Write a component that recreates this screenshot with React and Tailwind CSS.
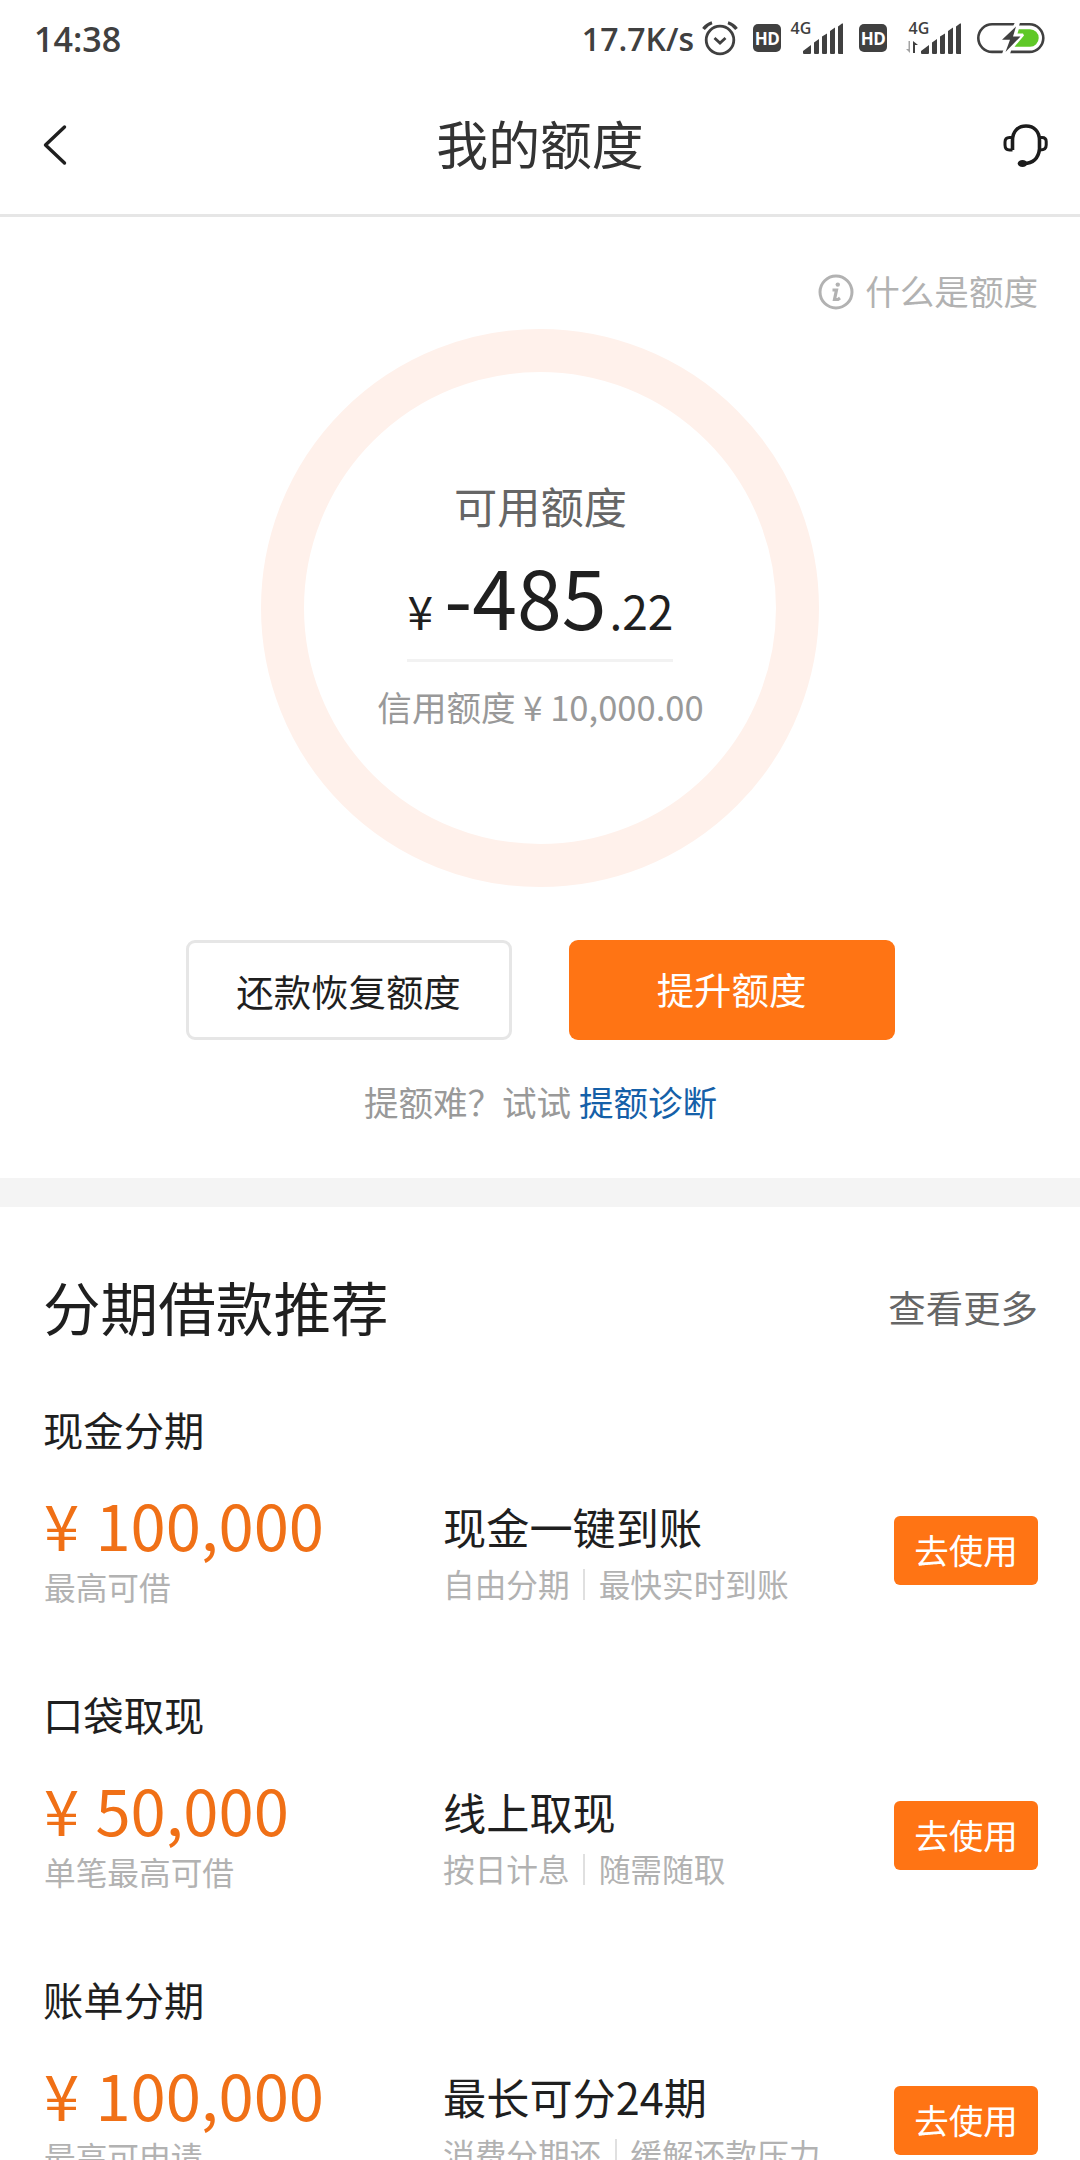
import React from 'react';

const plans = [
  {
    name: '现金分期',
    amount: '100,000',
    note: '最高可借',
    title: '现金一键到账',
    tags: ['自由分期', '最快实时到账'],
  },
  {
    name: '口袋取现',
    amount: '50,000',
    note: '单笔最高可借',
    title: '线上取现',
    tags: ['按日计息', '随需随取'],
  },
  {
    name: '账单分期',
    amount: '100,000',
    note: '最高可申请',
    title: '最长可分24期',
    tags: ['消费分期还', '缓解还款压力'],
  },
];

const AlarmIcon = () => (
  <svg className="w-[36px] h-[36px]" viewBox="0 0 36 36" fill="none" stroke="#404040" strokeWidth="2.8">
    <circle cx="18" cy="20" r="13.800" />
    <path d="M12.5 18l5.5 5 5.5-5" />
    <path d="M1.500 9Q4.500 4.500 10 2.800M34.500 9Q31.500 4.500 26 2.800" strokeWidth="3.200" />
  </svg>
);

const HdBadge = () => (
  <span className="flex w-[28px] h-[28px] items-center justify-center rounded-[5px] bg-[#404040] text-[17px] leading-none font-bold tracking-[-0.5px] text-white">
    HD
  </span>
);

const SignalIcon = ({ data }) => (
  <svg className="w-[58px] h-[36px]" viewBox="0 0 58 36" fill="#404040">
    <text x="5.500" y="15.500" fontSize="16" fontWeight="600">4G</text>
    {data && (
      <>
        <path d="M10 23v12h2V27l3 0z" />
        <path d="M7 23v12L3 31h2.500V23z" fill="#a3a3a3" />
      </>
    )}
    <path d="M18 35v-2l8-6v8a1 1 0 0 1-1 1h-6a1 1 0 0 1-1-1zM29 24.500l5-3.500v14a1 1 0 0 1-1 1h-3a1 1 0 0 1-1-1zM37 18.500l5-3v19.500a1 1 0 0 1-1 1h-3a1 1 0 0 1-1-1zM45 13l5-3.500v25.500a1 1 0 0 1-1 1h-3a1 1 0 0 1-1-1zM53 8.500l4-3q1.500-.5 1.500 1v28.500a1 1 0 0 1-1 1h-3.500a1 1 0 0 1-1-1z" />
  </svg>
);

const BatteryIcon = () => (
  <svg className="w-[68px] h-[34px]" viewBox="0 0 68 34" fill="none">
    <rect x="1.300" y="3.300" width="65" height="27.600" rx="13.800" stroke="#404040" strokeWidth="2.600" />
    <path d="M38.500 0h5L41 8l-8 25h-8l5-14z" fill="#fff" />
    <path d="M41.800 8.300H53a8.700 8.700 0 0 1 0 17.400H37.500L47 14.500 46 12.500h-5.500z" fill="#5fc827" />
    <path d="M39 5.500L25 18.800h8L28.500 31 43.500 15.500h-7.500z" fill="#404040" />
  </svg>
);

const BackIcon = () => (
  <svg className="w-[26px] h-[42px]" viewBox="0 0 26 42" fill="none" stroke="#1f1f1f" strokeWidth="3.4" strokeLinecap="round" strokeLinejoin="round">
    <path d="M22.500 3L3.500 21l19 18" />
  </svg>
);

const HeadsetIcon = () => (
  <svg className="w-[46px] h-[46px]" viewBox="0 0 46 46" fill="none" stroke="#1c1c1c" strokeWidth="3.600">
    <path d="M10.500 28V18.500C10.500 9.500 16 4 24 4S37.500 9.500 37.500 18.500v8.500C36.500 36 31 41.500 22 41.500" />
    <path d="M10.500 15.500H7.500Q3 15.500 3 20v3Q3 28 7.500 28h3M37.500 15.500H40Q44.200 15.500 44.200 19.500v3.500q0 5-6 5" strokeWidth="3" />
    <ellipse cx="20.500" cy="41.500" rx="4.800" ry="3.500" fill="#1c1c1c" stroke="none" />
  </svg>
);

const InfoIcon = () => (
  <svg className="w-[36px] h-[36px]" viewBox="0 0 36 36" fill="none" stroke="#b2b2b2">
    <circle cx="18" cy="18" r="16" strokeWidth="3" />
    <circle cx="19.800" cy="10.600" r="2.200" fill="#b2b2b2" stroke="none" />
    <path d="M14.500 16h4l-2 9.500h3.500l2-1.500" strokeWidth="3.200" />
  </svg>
);

function StatusBar() {
  return (
    <div className="flex h-[76px] items-center pl-[34px] pr-[35px] font-['Open_Sans','Noto_Sans',sans-serif] text-[#404040]">
      <span className="pt-[2px] text-[34px] leading-none font-semibold">14:38</span>
      <span className="ml-auto pt-[2px] text-[32px] leading-none font-semibold">17.7K/s</span>
      <div className="ml-[8px]"><AlarmIcon /></div>
      <div className="ml-[15px]"><HdBadge /></div>
      <div className="ml-[4px] -mt-[4px]"><SignalIcon /></div>
      <div className="ml-[16px]"><HdBadge /></div>
      <div className="ml-[16px] -mt-[4px]"><SignalIcon data /></div>
      <div className="ml-[16px]"><BatteryIcon /></div>
    </div>
  );
}

function Header() {
  return (
    <div className="flex h-[141px] items-center justify-between border-b-[3px] border-[#e6e6e6] pl-[42px] pr-[32px]">
      <div className="w-[56px]"><BackIcon /></div>
      <h1 className="pb-[5px] text-[51.84px] leading-[72px] text-[#333]">我的额度</h1>
      <div className="flex w-[66px] justify-end"><HeadsetIcon /></div>
    </div>
  );
}

function Quota() {
  return (
    <section className="flex h-[961px] flex-col items-center">
      <div className="mt-[50px] flex h-[50px] items-center gap-[11px] self-end pr-[42px] text-[34.56px] leading-[50px] text-[#b2b2b2]">
        <InfoIcon />
        <span className="pb-[4px]">什么是额度</span>
      </div>

      <div className="mt-[12px] flex h-[558px] w-[558px] flex-col items-center rounded-full border-[43px] border-[#fff1eb]">
        <div className="mt-[103px] pl-[1px] text-[43.2px] leading-[60px] text-[#666]">可用额度</div>
        <div className="mt-[10px] flex h-[117px] items-baseline border-b-[3px] border-[#f2f2f2] text-[46.08px] leading-[100px] text-[#1f1f1f]">
          <span className="pl-[1px]">¥</span>
          <span className="ml-[11px] text-[80.64px]">-485</span>
          <span className="ml-[3px]">.22</span>
        </div>
        <div className="mt-[19px] pl-[1px] text-[34.56px] leading-[50px] whitespace-nowrap text-[#999]">信用额度 ¥ 10,000.00</div>
      </div>

      <div className="mt-[53px] flex gap-[57px]">
        <button className="h-[100px] w-[326px] rounded-[9px] border-[3px] border-[#e6e6e6] pt-[2px] text-[37.44px] leading-[54px] text-[#1f1f1f]">
          还款恢复额度
        </button>
        <button className="h-[100px] w-[326px] rounded-[9px] bg-[#ff7414] pb-[2px] text-[37.44px] leading-[54px] text-white">
          提升额度
        </button>
      </div>

      <p className="mt-[36px] pl-[1px] text-[34.56px] leading-[50px] text-[#999]">
        提额难？试试 <a className="text-[#1560a8]">提额诊断</a>
      </p>
    </section>
  );
}

function PlanItem({ plan }) {
  return (
    <li className="h-[285.12px] pt-[51px]">
      <h3 className="text-[40.32px] leading-[58px] text-[#1f1f1f]">{plan.name}</h3>
      <div className="mt-[35px] flex items-start">
        <div className="w-[400px] pl-[1px]">
          <div className="pt-[1px] text-[63.36px] leading-[60px] text-[#f07016]">
            <span className="mr-[2px]">¥</span> {plan.amount}
          </div>
          <div className="mt-[10px] text-[31.68px] leading-[44px] text-[#b2b2b2]">{plan.note}</div>
        </div>
        <div className="pt-[3px]">
          <div className="text-[43.2px] leading-[60px] text-[#1f1f1f]">{plan.title}</div>
          <div className="mt-[5px] flex items-center text-[31.68px] leading-[44px] text-[#b2b2b2]">
            {plan.tags[0]}
            <span className="mx-[13.5px] mt-[2px] h-[31px] w-[2px] bg-[#e0e0e0]" />
            {plan.tags[1]}
          </div>
        </div>
        <button className="mt-[23px] ml-auto h-[69px] w-[144px] rounded-[6px] bg-[#ff7414] pb-[3px] text-[34.56px] leading-[50px] text-white">
          去使用
        </button>
      </div>
    </li>
  );
}

function Recommend() {
  return (
    <section className="border-t-[29px] border-[#f4f4f4] pt-[56px] pr-[42px] pl-[43px]">
      <div className="flex h-[86px] items-center justify-between">
        <h2 className="text-[57.6px] leading-[86px] text-[#1f1f1f]">分期借款推荐</h2>
        <span className="pt-[2px] text-[37.44px] leading-[54px] text-[#666]">查看更多</span>
      </div>
      <ul>
        {plans.map((plan) => (
          <PlanItem key={plan.name} plan={plan} />
        ))}
      </ul>
    </section>
  );
}

export default function App() {
  return (
    <div lang="zh-CN" className="h-[2160px] w-[1080px] overflow-hidden bg-white font-['Noto_Sans_CJK_SC',sans-serif]">
      <StatusBar />
      <Header />
      <Quota />
      <Recommend />
    </div>
  );
}
